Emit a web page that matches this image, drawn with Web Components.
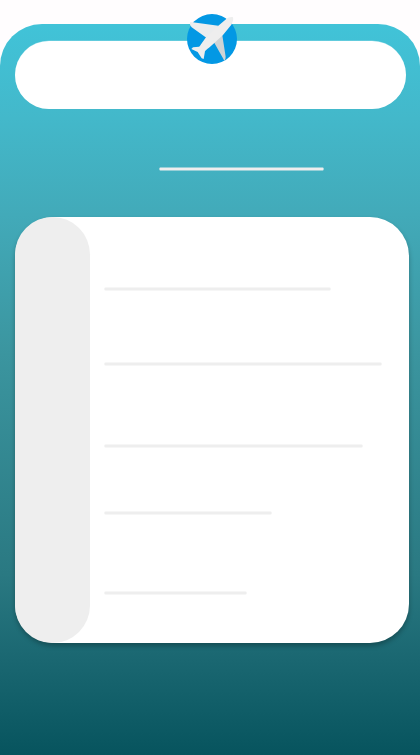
<!DOCTYPE html>
<html lang="en">
<head>
<meta charset="utf-8">
<title>Travel</title>
<style>
html, body { margin: 0; height: 100%; background: #fffdfe; font-family: Roboto, sans-serif; overflow: hidden; }
</style>
</head>
<body>
<travel-screen></travel-screen>
<script>
const attach = (el, html) => { el.attachShadow({ mode: 'open' }).innerHTML = html; };

// Thin rounded rule; its width comes from the "length" attribute, in pixels.
customElements.define('text-rule', class extends HTMLElement {
  constructor() {
    super();
    const w = Number(this.getAttribute('length')) || 100;
    attach(this, `<style>:host{display:block;height:4px}svg{display:block}</style>
      <svg width="${w}" height="4"><rect x=".4" y=".5" width="${w - .8}" height="3" rx="1" fill="#eee"/></svg>`);
  }
});

customElements.define('plane-badge', class extends HTMLElement {
  constructor() {
    super();
    attach(this, `<style>:host{display:block;width:50px;height:50px}svg{display:block}</style>
      <svg width="50" height="50" viewBox="21 18 150 150">
        <circle cx="96" cy="93" r="75" fill="#0398e4"/>
        <path d="M101 101 L126 76 L137 146 Q137 153 134 158 Q131 156 129 151 Z" fill="#cfd3d5"/>
        <path d="M30 43 Q33 42 38 43 L115 53 L98 82 L77 88 L35 58 Q28 52 30 43 Z" fill="#ebedee"/>
        <path d="M159 28 C152 26 145 29 138 34 L106 61 L78 88 L62 110 Q60 115 57 116 L39 118 L34 123 L53 132 L65 151 L71 153 L75 130 C77 126 83 122 87 119 L103 105 L129 81 L154 50 C158 44 161 34 159 28 Z" fill="#eee"/>
      </svg>`);
  }
});

customElements.define('search-pill', class extends HTMLElement {
  constructor() {
    super();
    attach(this, `<style>:host{display:block;height:68px;background:#fff;border-radius:34px;box-shadow:0 -.5px 0 rgba(255,255,255,.35)}</style><slot></slot>`);
  }
});

customElements.define('detail-card', class extends HTMLElement {
  constructor() {
    super();
    attach(this, `<style>
      :host{display:flex;box-sizing:border-box;height:426px;background:#fff;border-radius:39px;box-shadow:0 3px 5px rgba(0,0,0,.28)}
      .rail{flex:none;width:75px;background:#eee;border-radius:38px}
      .content{padding:70px 0 0 14px}
      </style><div class="rail"></div><div class="content"><slot></slot></div>`);
  }
});

customElements.define('travel-screen', class extends HTMLElement {
  constructor() {
    super();
    attach(this, `<style>
      :host{display:block;position:relative;height:755px;padding-top:24px;box-sizing:border-box}
      main{display:flow-root;box-sizing:border-box;height:731px;border-radius:42px 42px 0 0;
        background:linear-gradient(180deg,#41c3d8 0,#43b8ca 95px,#42aab9 191px,#3b959f 330px,#2a7982 550px,#1b6872 631px,#07545e 731px)}
      search-pill{margin:17px 14px 0 15px}
      .title{margin:58px 0 0 159px}
      detail-card{margin:46px 11px 0 15px}
      text-rule + text-rule{margin-top:var(--gap)}
      plane-badge{position:absolute;left:187px;top:14px}
      </style>
      <main>
        <search-pill></search-pill>
        <text-rule class="title" length="165"></text-rule>
        <detail-card>
          <text-rule length="227"></text-rule>
          <text-rule length="278" style="--gap:71px"></text-rule>
          <text-rule length="259" style="--gap:78px"></text-rule>
          <text-rule length="168" style="--gap:63px"></text-rule>
          <text-rule length="143" style="--gap:76px"></text-rule>
        </detail-card>
      </main>
      <plane-badge></plane-badge>`);
  }
});
</script>
</body>
</html>
